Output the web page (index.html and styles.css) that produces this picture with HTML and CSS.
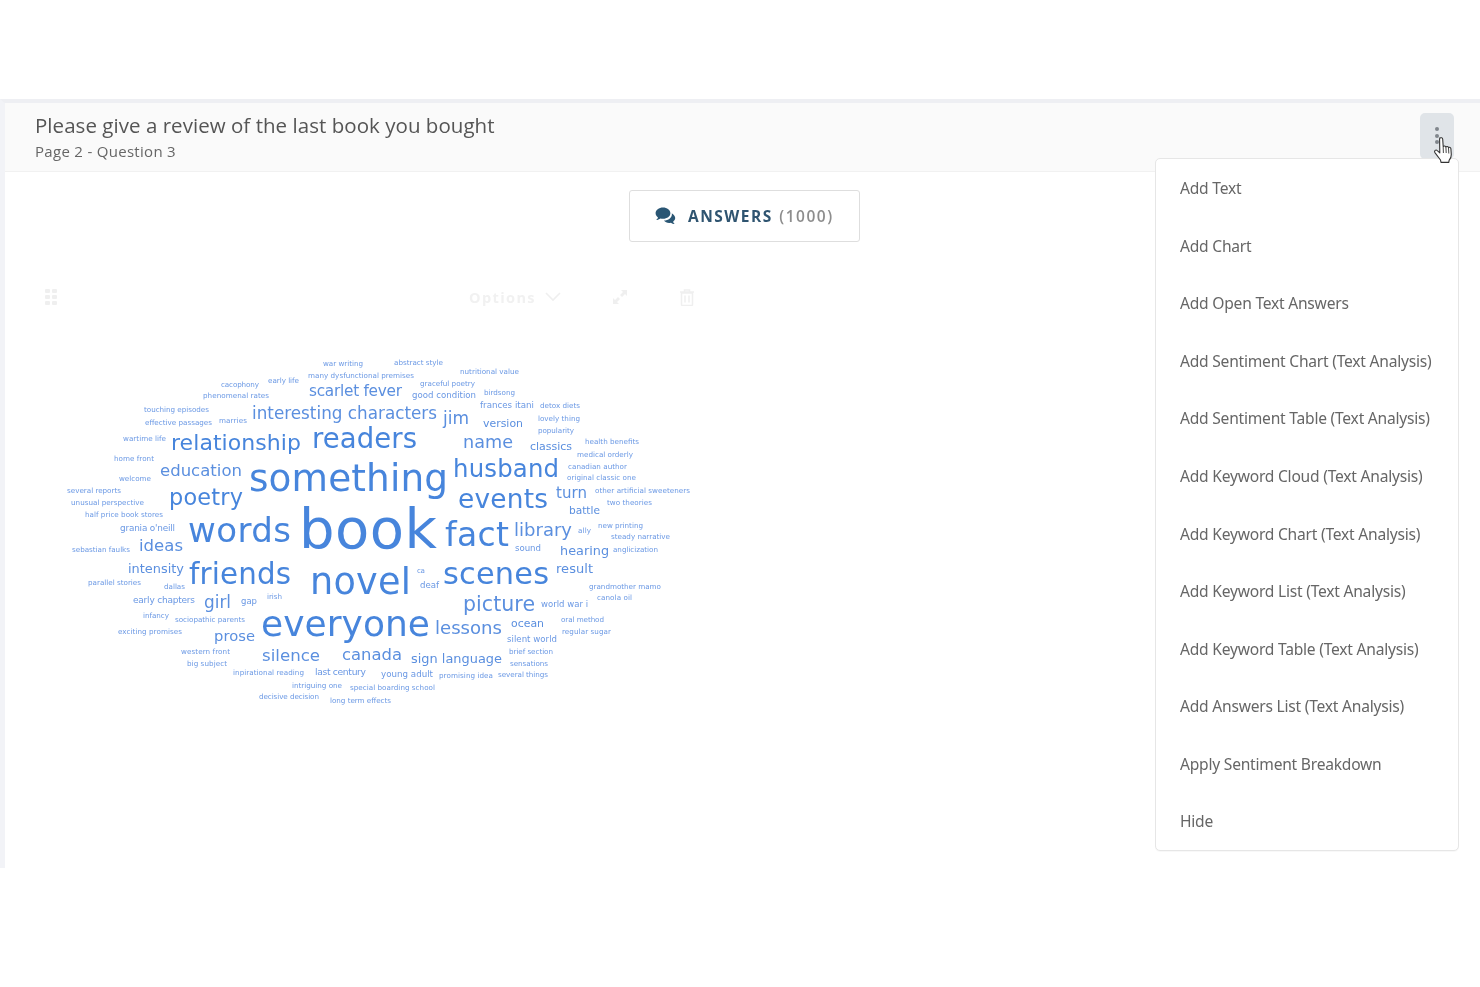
FILE: index.html
```html
<!DOCTYPE html>
<html lang="en">
<head>
<meta charset="utf-8">
<title>Question report</title>
<link rel="stylesheet" href="styles.css">
</head>
<body>
<div class="top-space"></div>
<section class="panel">
  <header class="panel-head">
    <div class="head-text">
      <h1 class="q-title">Please give a review of the last book you bought</h1>
      <p class="q-sub">Page 2 - Question 3</p>
    </div>
    <button class="kebab" type="button" aria-label="More">
      <span class="dot"></span><span class="dot"></span><span class="dot"></span>
    </button>
  </header>
  <div class="panel-body">
    <div class="tab-row">
      <div class="answers-btn">
        <svg class="chat-icon" viewBox="0 0 22 18" width="22" height="18"><path class="chat-fill" d="M8 0.5C3.9 0.5 0.6 3 0.6 6.2c0 1.7 0.9 3.2 2.4 4.2-0.3 1-1 1.9-1.9 2.6 1.6-0.1 3.2-0.7 4.4-1.6 0.8 0.2 1.6 0.3 2.5 0.3 4.1 0 7.4-2.5 7.4-5.5S12.1 0.5 8 0.5z"/><path class="chat-fill" d="M16.7 6.2c0.2 0.3 0.2 0.7 0.2 1 0 3.4-3.5 6.2-7.9 6.4 1 1.4 2.9 2.3 5.1 2.3 0.6 0 1.2-0.1 1.8-0.2 1 0.8 2.4 1.3 3.8 1.4-0.8-0.7-1.4-1.5-1.6-2.4 1.3-0.9 2.1-2.2 2.1-3.6 0-2-1.5-3.6-3.5-4.9z"/></svg>
        <span class="answers-label">ANSWERS</span>
        <span class="answers-count">(1000)</span>
      </div>
    </div>
    <div class="widget-bar">
      <svg class="grip" viewBox="0 0 12 16" width="12" height="16"><g class="faint-fill"><rect x="0" y="0" width="5" height="4" rx="1"/><rect x="7" y="0" width="5" height="4" rx="1"/><rect x="0" y="6" width="5" height="4" rx="1"/><rect x="7" y="6" width="5" height="4" rx="1"/><rect x="0" y="12" width="5" height="4" rx="1"/><rect x="7" y="12" width="5" height="4" rx="1"/></g></svg>
      <span class="options">Options</span>
      <svg class="chevron" viewBox="0 0 16 10" width="16" height="10"><path d="M1 1l7 7 7-7" fill="none" stroke="#efefef" stroke-width="1.6"/></svg>
      <svg class="expand" viewBox="0 0 16 16" width="16" height="16"><path class="faint-fill" d="M9 1h6v6l-2-2-3 3-2-2 3-3zM1 15v-6l2 2 3-3 2 2-3 3 2 2z"/></svg>
      <svg class="trash" viewBox="0 0 14 17" width="14" height="17"><path d="M1.5 4h11v11.5a1 1 0 0 1-1 1h-9a1 1 0 0 1-1-1zM0 3h14M4.5 3V1h5v2M5 6.500v7M9 6.500v7" fill="none" stroke="#efefef" stroke-width="1.500"/></svg>
    </div>
    <svg class="cloud" viewBox="60 350 640 360" width="640" height="360" role="img" aria-label="Keyword cloud">
      <g class="w-xl">
        <text x="299" y="548" font-size="56" textLength="138">book</text>
        <text x="249" y="491" font-size="37.400" textLength="199">something</text>
        <text x="188" y="542" font-size="34" textLength="103">words</text>
        <text x="310" y="594" font-size="36.600" textLength="101">novel</text>
        <text x="261" y="636" font-size="36" textLength="169">everyone</text>
        <text x="189" y="584" font-size="29.300" textLength="102">friends</text>
        <text x="445" y="546" font-size="33" textLength="64">fact</text>
        <text x="443" y="584" font-size="30.400" textLength="106">scenes</text>
        <text x="453" y="477" font-size="24.400" textLength="106">husband</text>
        <text x="458" y="508" font-size="26.400" textLength="90">events</text>
        <text x="312" y="448" font-size="27.500" textLength="105">readers</text>
        <text x="171" y="450" font-size="22" textLength="130">relationship</text>
        <text x="169" y="505" font-size="22.400" textLength="74">poetry</text>
      </g>
      <g class="w-md">
        <text x="160" y="476" font-size="16.500" textLength="82">education</text>
        <text x="252" y="419" font-size="16.800" textLength="185">interesting characters</text>
        <text x="309" y="396" font-size="15.300" textLength="93">scarlet fever</text>
        <text x="443" y="424" font-size="17" textLength="26">jim</text>
        <text x="463" y="448" font-size="17.600" textLength="50">name</text>
        <text x="514" y="536" font-size="18" textLength="58">library</text>
        <text x="139" y="551" font-size="16.500" textLength="44">ideas</text>
        <text x="128" y="573" font-size="12.900" textLength="56">intensity</text>
        <text x="204" y="608" font-size="16.900" textLength="27">girl</text>
        <text x="214" y="641" font-size="14.700" textLength="41">prose</text>
        <text x="262" y="661" font-size="16.600" textLength="58">silence</text>
        <text x="342" y="660" font-size="16.400" textLength="60">canada</text>
        <text x="411" y="663" font-size="12.900" textLength="91">sign language</text>
        <text x="435" y="634" font-size="18.100" textLength="67">lessons</text>
        <text x="463" y="611" font-size="20.500" textLength="72">picture</text>
        <text x="556" y="573" font-size="13" textLength="37">result</text>
        <text x="560" y="555" font-size="12.800" textLength="49">hearing</text>
        <text x="556" y="498" font-size="15" textLength="31">turn</text>
        <text x="569" y="514" font-size="10.600" textLength="31">battle</text>
        <text x="530" y="450" font-size="11" textLength="42">classics</text>
        <text x="483" y="427" font-size="10.900" textLength="40">version</text>
        <text x="511" y="627" font-size="10.900" textLength="33">ocean</text>
      </g>
      <g class="w-sm">
        <text x="381" y="677" font-size="8.700" textLength="52">young adult</text>
        <text x="315" y="675" font-size="9.200" textLength="51">last century</text>
        <text x="507" y="642" font-size="8.600" textLength="50">silent world</text>
        <text x="541" y="607" font-size="8.500" textLength="47">world war i</text>
        <text x="480" y="408" font-size="8.700" textLength="54">frances itani</text>
        <text x="412" y="398" font-size="8.600" textLength="64">good condition</text>
        <text x="515" y="551" font-size="8.600" textLength="26">sound</text>
        <text x="420" y="588" font-size="8.600" textLength="19">deaf</text>
        <text x="120" y="531" font-size="8.900" textLength="55">grania o'neill</text>
        <text x="133" y="603" font-size="9" textLength="62">early chapters</text>
        <text x="241" y="604" font-size="8.500" textLength="16">gap</text>
        <text x="323" y="366" font-size="7.200" textLength="40">war writing</text>
        <text x="308" y="378" font-size="7.200" textLength="106">many dysfunctional premises</text>
        <text x="221" y="387" font-size="7.200" textLength="38">cacophony</text>
        <text x="268" y="383" font-size="7.200" textLength="31">early life</text>
        <text x="203" y="398" font-size="7.200" textLength="66">phenomenal rates</text>
        <text x="144" y="412" font-size="7.200" textLength="65">touching episodes</text>
        <text x="145" y="425" font-size="7.200" textLength="67">effective passages</text>
        <text x="219" y="423" font-size="7.200" textLength="28">marries</text>
        <text x="123" y="441" font-size="7.200" textLength="43">wartime life</text>
        <text x="114" y="461" font-size="7.200" textLength="40">home front</text>
        <text x="119" y="481" font-size="7.200" textLength="32">welcome</text>
        <text x="67" y="493" font-size="7.200" textLength="54">several reports</text>
        <text x="71" y="505" font-size="7.200" textLength="73">unusual perspective</text>
        <text x="85" y="517" font-size="7.200" textLength="78">half price book stores</text>
        <text x="72" y="552" font-size="7.200" textLength="58">sebastian faulks</text>
        <text x="88" y="585" font-size="7.200" textLength="53">parallel stories</text>
        <text x="164" y="589" font-size="7.200" textLength="21">dallas</text>
        <text x="267" y="599" font-size="7.200" textLength="15">irish</text>
        <text x="143" y="618" font-size="7.200" textLength="26">infancy</text>
        <text x="175" y="622" font-size="7.200" textLength="70">sociopathic parents</text>
        <text x="118" y="634" font-size="7.200" textLength="64">exciting promises</text>
        <text x="181" y="654" font-size="7.200" textLength="49">western front</text>
        <text x="187" y="666" font-size="7.200" textLength="40">big subject</text>
        <text x="233" y="675" font-size="7.200" textLength="71">inpirational reading</text>
        <text x="292" y="688" font-size="7.200" textLength="50">intriguing one</text>
        <text x="259" y="699" font-size="7.200" textLength="60">decisive decision</text>
        <text x="350" y="690" font-size="7.200" textLength="85">special boarding school</text>
        <text x="330" y="703" font-size="7.200" textLength="61">long term effects</text>
        <text x="439" y="678" font-size="7.200" textLength="54">promising idea</text>
        <text x="498" y="677" font-size="7.200" textLength="50">several things</text>
        <text x="510" y="666" font-size="7.200" textLength="38">sensations</text>
        <text x="509" y="654" font-size="7.200" textLength="44">brief section</text>
        <text x="562" y="634" font-size="7.200" textLength="49">regular sugar</text>
        <text x="561" y="622" font-size="7.200" textLength="43">oral method</text>
        <text x="597" y="600" font-size="7.200" textLength="35">canola oil</text>
        <text x="589" y="589" font-size="7.200" textLength="72">grandmother mamo</text>
        <text x="417" y="573" font-size="7.200" textLength="8">ca</text>
        <text x="613" y="552" font-size="7.200" textLength="45">anglicization</text>
        <text x="611" y="539" font-size="7.200" textLength="59">steady narrative</text>
        <text x="394" y="365" font-size="7.200" textLength="49">abstract style</text>
        <text x="460" y="374" font-size="7.200" textLength="59">nutritional value</text>
        <text x="420" y="386" font-size="7.200" textLength="55">graceful poetry</text>
        <text x="484" y="395" font-size="7.200" textLength="31">birdsong</text>
        <text x="540" y="408" font-size="7.200" textLength="40">detox diets</text>
        <text x="538" y="421" font-size="7.200" textLength="42">lovely thing</text>
        <text x="538" y="433" font-size="7.200" textLength="36">popularity</text>
        <text x="585" y="444" font-size="7.200" textLength="54">health benefits</text>
        <text x="577" y="457" font-size="7.200" textLength="56">medical orderly</text>
        <text x="568" y="469" font-size="7.200" textLength="59">canadian author</text>
        <text x="567" y="480" font-size="7.200" textLength="69">original classic one</text>
        <text x="595" y="493" font-size="7.200" textLength="95">other artificial sweeteners</text>
        <text x="607" y="505" font-size="7.200" textLength="45">two theories</text>
        <text x="578" y="533" font-size="7.200" textLength="13">ally</text>
        <text x="598" y="528" font-size="7.200" textLength="45">new printing</text>
      </g>
    </svg>
  </div>
  <ul class="menu">
    <li>Add Text</li>
    <li>Add Chart</li>
    <li>Add Open Text Answers</li>
    <li>Add Sentiment Chart (Text Analysis)</li>
    <li>Add Sentiment Table (Text Analysis)</li>
    <li>Add Keyword Cloud (Text Analysis)</li>
    <li>Add Keyword Chart (Text Analysis)</li>
    <li>Add Keyword List (Text Analysis)</li>
    <li>Add Keyword Table (Text Analysis)</li>
    <li>Add Answers List (Text Analysis)</li>
    <li>Apply Sentiment Breakdown</li>
    <li>Hide</li>
  </ul>
  <svg class="cursor" viewBox="0 0 22 28" width="22" height="28"><path d="M7 2.200c1-1 2.600-0.400 2.700 1l0.500 7.300c0.800-0.800 2.300-0.600 2.700 0.400 0.800-0.700 2.200-0.400 2.600 0.600 1-0.500 2.300 0.100 2.400 1.300l0.400 5.700c0.100 2.400-0.800 4.300-2.200 5.900l-0.300 2H8l-0.500-2.400-5.600-7.400c-1.100-1.700 0.900-3.400 2.400-2l2.500 2.200-0.200-13.300c0-0.700 0.100-1.300 0.400-1.800z" fill="#fff" stroke="#333" stroke-width="1.100" stroke-linejoin="round"/><path d="M10.200 11l0.200 6M12.900 11l0.300 6M15.500 12l0.300 5.500" fill="none" stroke="#333" stroke-width="0.900"/></svg>
</section>
</body>
</html>
```
FILE: styles.css
```css
* { box-sizing: border-box; }
html, body { margin: 0; padding: 0; background: #fff; }
body { width: 1480px; height: 987px; overflow: hidden; font-family: "Open Sans", "Noto Sans", sans-serif; filter: blur(0.45px); }
.top-space { height: 99px; }
.panel { position: relative; height: 769px; border-top: 4px solid #eeeff3; border-left: 5px solid #f2f3f7; }
.panel-head { height: 69px; background: #fafafa; border-bottom: 1px solid #f1f1f1; display: flex; justify-content: space-between; padding: 9px 26px 0 30px; }
.q-title { margin: 0; font-size: 20.500px; line-height: 26px; font-weight: 400; color: #555; letter-spacing: 0.04px; }
.q-sub { margin: 3px 0 0; font-size: 15px; line-height: 20px; color: #666; letter-spacing: 0.3px; }
.kebab { width: 34px; height: 46px; margin-top: 1px; border: 0; border-radius: 5px; background: #e0e4e8; padding: 14px 0 0; display: flex; flex-direction: column; align-items: center; gap: 2.500px; }
.dot { width: 4px; height: 4px; flex: none; border-radius: 50%; background: #80868c; }
.panel-body { padding-top: 18px; }
.tab-row { display: flex; padding-left: 624px; }
.answers-btn { width: 231px; height: 52px; border: 1px solid #dedede; border-radius: 3px; display: flex; align-items: center; padding-left: 25px; background: #fff; }
.chat-icon { margin-right: 11px; }
.chat-fill { fill: #2a5674; }
.answers-label { font-size: 15.500px; font-weight: 700; letter-spacing: 1.500px; color: #2f5470; margin-right: 6.500px; }
.answers-count { font-size: 15.500px; font-weight: 600; letter-spacing: 1.500px; color: #8d8d8d; }
.widget-bar { display: flex; align-items: center; height: 20px; margin-top: 45px; padding-left: 40px; }
.faint-fill { fill: #efefef; }
.grip { margin-right: 412px; }
.options { font-size: 14.500px; font-weight: 700; letter-spacing: 1.400px; color: #f1f1f1; width: 76px; }
.expand { margin-left: 51px; }
.trash { margin-left: 52px; }
.cloud { display: block; margin: 43px 0 0 55px; font-family: "DejaVu Sans", sans-serif; }
.w-xl { fill: #4785dc; }
.w-md { fill: #5b8fdf; }
.w-sm { fill: #6a98e4; }
.menu { position: absolute; left: 1150px; top: 55px; width: 304px; height: 693px; margin: 0; padding: 1.300px 0; list-style: none; background: #fff; border: 1px solid #e6e6e6; border-radius: 5px; box-shadow: 0 1px 1px rgba(0, 0, 0, 0.03); }
.menu li { height: 57.550px; line-height: 57.550px; padding-left: 24px; font-family: "Noto Sans", "Open Sans", sans-serif; font-size: 15.600px; letter-spacing: -0.230px; color: #666; white-space: nowrap; }
.cursor { position: absolute; left: 1428px; top: 33px; }
```
